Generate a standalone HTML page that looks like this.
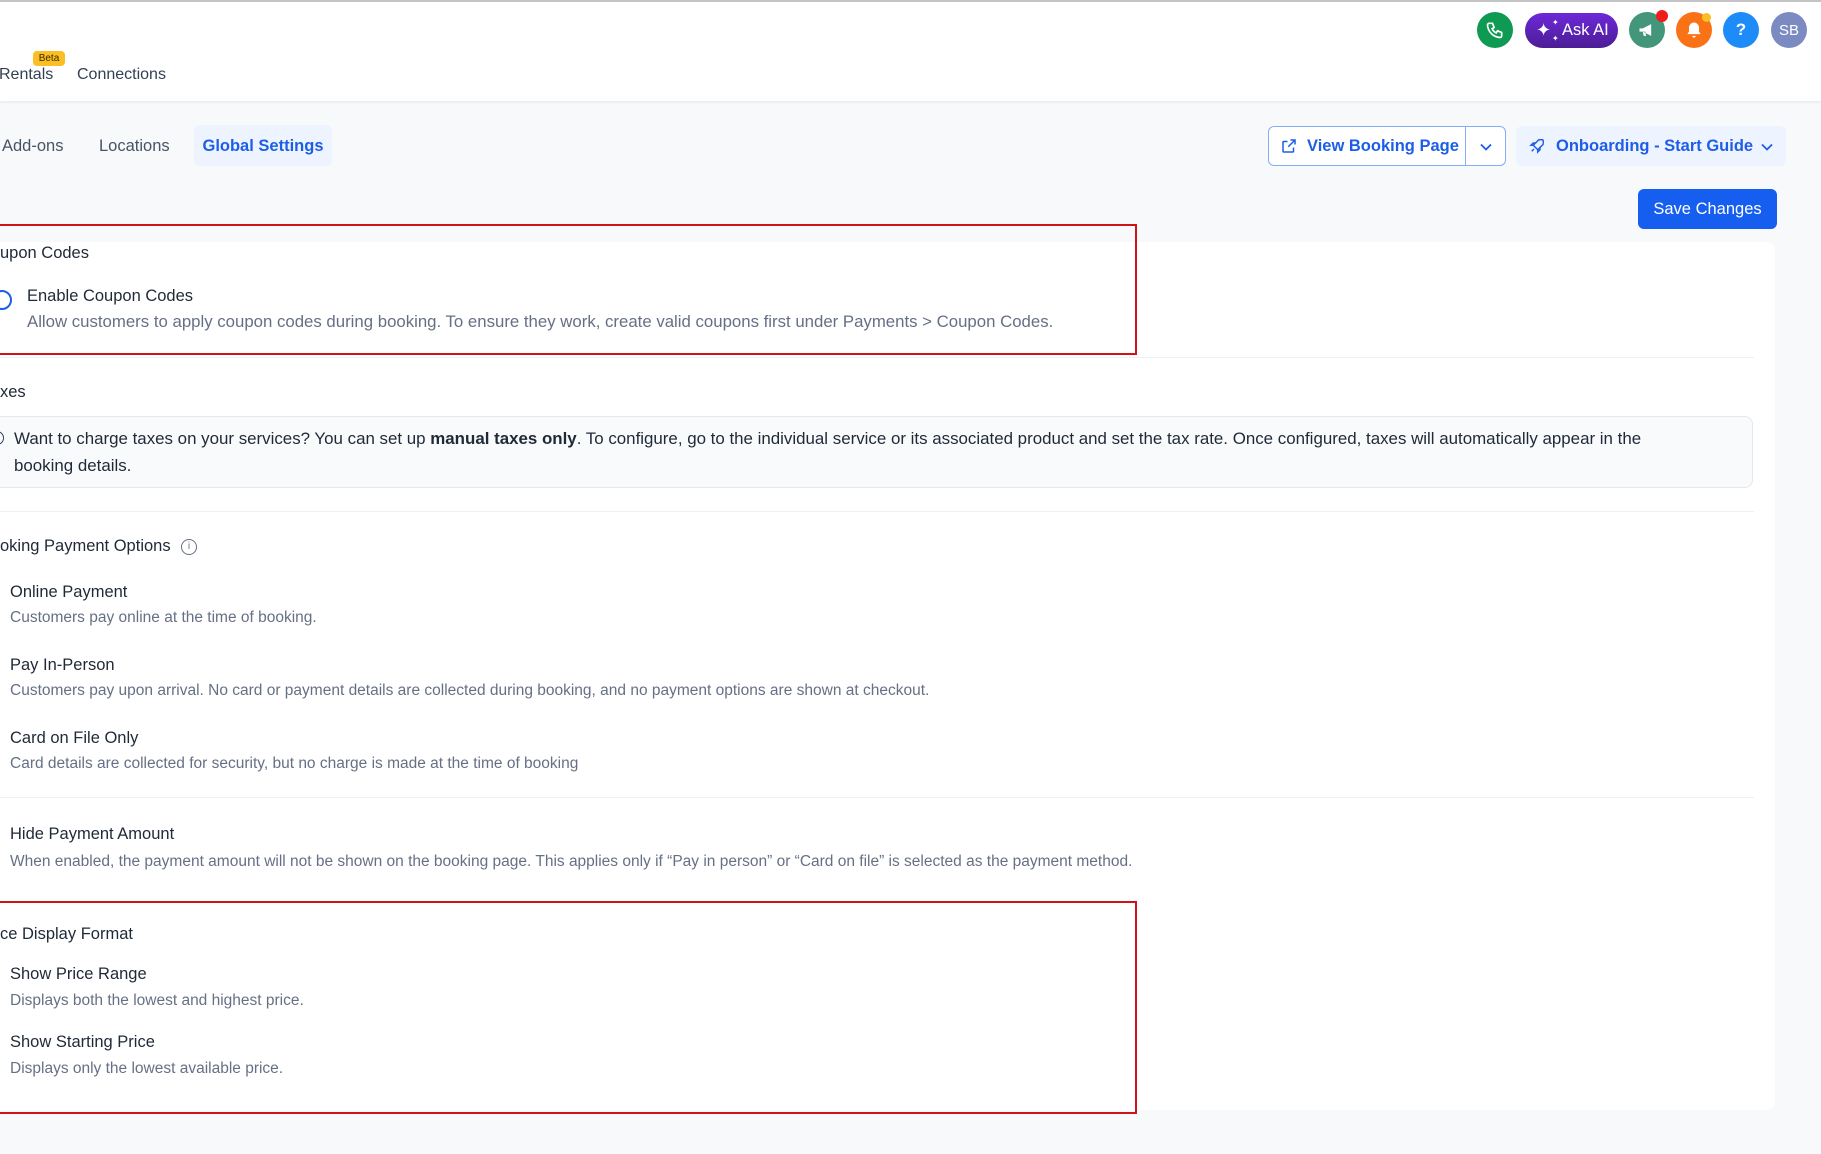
<!DOCTYPE html>
<html><head><meta charset="utf-8">
<style>
*{box-sizing:border-box;margin:0;padding:0}
body{width:1821px;height:1154px;overflow:hidden;background:#f8f9fb;font-family:"Liberation Sans",sans-serif;position:relative;color:#1f2937}
.a{position:absolute;white-space:nowrap}
.t{font-size:16.5px;color:#1f2937;line-height:20px}
.d{font-size:15.5px;color:#667085;line-height:20px}
.hdr{position:absolute;left:0;top:0;width:1821px;height:101px;background:#fff;border-top:2px solid #c4c4c4;box-shadow:0 1px 3px rgba(0,0,0,.08)}
.circ{position:absolute;width:36px;height:36px;border-radius:50%;top:10px;display:flex;align-items:center;justify-content:center;color:#fff}
.red{position:absolute;border:2px solid #d0121b}
.hr{position:absolute;left:0;width:1754px;height:1px;background:#eef0f3}
</style></head><body>
<div class="hdr">
  <div class="a" style="left:33px;top:49px;width:32px;height:15px;background:#fbbf24;border-radius:4px;font-size:10px;line-height:15px;text-align:center;color:#3b2a00">Beta</div>
  <div class="a" style="left:-1px;top:64px;font-size:16px;color:#344054">Rentals</div>
  <div class="a" style="left:77px;top:64px;font-size:16px;color:#344054">Connections</div>
  <div class="circ" style="left:1477px;background:#0e9a52"><svg width="20" height="20" viewBox="0 0 24 24" fill="none" stroke="#fff" stroke-width="2"><path d="M5 4h4l2 5-2.5 1.5a11 11 0 005 5L15 13l5 2v4a2 2 0 01-2 2A16 16 0 013 6a2 2 0 012-2"/></svg></div>
  <div class="a" style="left:1525px;top:11px;width:93px;height:35px;border-radius:18px;background:linear-gradient(#6d28d9,#4c1d95);color:#fff;font-size:16.5px;line-height:35px;padding-left:37px">Ask AI<span style="position:absolute;left:11px;top:0;font-size:18px">✦</span><span style="position:absolute;left:27px;top:-8px;font-size:8px">✦</span><span style="position:absolute;left:27px;top:8px;font-size:8px">✦</span></div>
  <div class="circ" style="left:1629px;background:#43967a"><svg width="20" height="20" viewBox="0 0 24 24" fill="#fff"><path d="M3 10h4l10-5v14L7 14H3z M7 14l1 5h3l-1-5"/></svg><span style="position:absolute;right:-3px;top:-2px;width:12px;height:12px;border-radius:50%;background:#ef1c1c"></span></div>
  <div class="circ" style="left:1676px;background:#f97316"><svg width="20" height="20" viewBox="0 0 24 24" fill="#fff"><path d="M12 3a6 6 0 00-6 6v5l-2 3h16l-2-3V9a6 6 0 00-6-6zM10 19h4a2 2 0 01-4 0"/></svg><span style="position:absolute;right:1px;top:1px;width:9px;height:9px;border-radius:50%;background:#fbbf24"></span></div>
  <div class="circ" style="left:1723px;background:#1d8cf8;font-size:17px;font-weight:bold">?</div>
  <div class="circ" style="left:1771px;background:#7b8bc2;font-size:15px">SB</div>
</div>

<div class="a" style="left:2px;top:137px;font-size:16.5px;color:#475467">Add-ons</div>
<div class="a" style="left:99px;top:137px;font-size:16.5px;color:#475467">Locations</div>
<div class="a" style="left:194px;top:125px;width:138px;height:41px;background:#eef4ff;border-radius:5px;font-size:16.5px;font-weight:bold;color:#1d5ee8;line-height:43px;text-align:center">Global Settings</div>

<div class="a" style="left:1268px;top:126px;width:238px;height:40px;border:1px solid #84adf5;border-radius:6px;background:#fff"></div>
<div class="a" style="left:1465px;top:126px;width:1px;height:40px;background:#84adf5"></div>
<svg class="a" style="left:1280px;top:137px" width="18" height="18" viewBox="0 0 24 24" fill="none" stroke="#1d5ee8" stroke-width="2"><path d="M14 4h6v6M20 4l-9 9M18 14v5a1 1 0 01-1 1H5a1 1 0 01-1-1V7a1 1 0 011-1h5"/></svg>
<div class="a" style="left:1307px;top:137px;font-size:16.5px;font-weight:bold;color:#1d5ee8">View Booking Page</div>
<svg class="a" style="left:1476px;top:137px" width="20" height="20" viewBox="0 0 24 24" fill="none" stroke="#1d5ee8" stroke-width="2.2"><path d="M6 9l6 6 6-6"/></svg>
<div class="a" style="left:1516px;top:126px;width:270px;height:40px;background:#eef4ff;border-radius:6px"></div>
<svg class="a" style="left:1528px;top:137px" width="18" height="18" viewBox="0 0 24 24" fill="none" stroke="#1d5ee8" stroke-width="2"><path d="M5 19l3-3M14 4c3-1 6 0 6 0s1 3 0 6l-7 7-6-6 7-7zM7 11H4l3-3h4M13 17v3l3-3v-4"/></svg>
<div class="a" style="left:1556px;top:137px;font-size:16.5px;font-weight:bold;color:#1d5ee8">Onboarding - Start Guide</div>
<svg class="a" style="left:1757px;top:137px" width="20" height="20" viewBox="0 0 24 24" fill="none" stroke="#1d5ee8" stroke-width="2.2"><path d="M6 9l6 6 6-6"/></svg>

<div class="a" style="left:1638px;top:189px;width:139px;height:40px;background:#155eef;border-radius:6px;color:#fff;font-size:16.5px;line-height:41px;text-align:center">Save Changes</div>

<div class="a" style="left:-10px;top:242px;width:1785px;height:868px;background:#fff;border-radius:8px"></div>

<div class="a t" style="left:0;top:243px">upon Codes</div>
<div class="a" style="left:-8px;top:290px;width:20px;height:20px;border:2.5px solid #1d5ee8;border-radius:50%"></div>
<div class="a t" style="left:27px;top:286px">Enable Coupon Codes</div>
<div class="a" style="left:27px;top:312px;font-size:16.8px;color:#667085;line-height:20px">Allow customers to apply coupon codes during booking. To ensure they work, create valid coupons first under Payments &gt; Coupon Codes.</div>
<div class="hr" style="top:357px"></div>

<div class="a t" style="left:0;top:382px">xes</div>
<div class="a" style="left:-10px;top:416px;width:1763px;height:72px;border:1px solid #e4e7ec;border-radius:8px;background:#f9fafb"></div>
<div class="a" style="left:-10px;top:431px;width:14px;height:14px;border:1.5px solid #344054;border-radius:50%"></div>
<div class="a" style="left:14px;top:429px;font-size:16.9px;color:#1f2937;line-height:20px">Want to charge taxes on your services? You can set up <b>manual taxes only</b>. To configure, go to the individual service or its associated product and set the tax rate. Once configured, taxes will automatically appear in the</div>
<div class="a" style="left:14px;top:456px;font-size:16.9px;color:#1f2937;line-height:20px">booking details.</div>
<div class="hr" style="top:511px"></div>

<div class="a t" style="left:0;top:536px">oking Payment Options</div>
<div class="a" style="left:181px;top:539px;width:16px;height:16px;border:1.3px solid #667085;border-radius:50%;font-size:10px;line-height:14px;text-align:center;color:#667085">i</div>

<div class="a t" style="left:10px;top:582px">Online Payment</div>
<div class="a d" style="left:10px;top:608px">Customers pay online at the time of booking.</div>
<div class="a t" style="left:10px;top:655px">Pay In-Person</div>
<div class="a d" style="left:10px;top:681px">Customers pay upon arrival. No card or payment details are collected during booking, and no payment options are shown at checkout.</div>
<div class="a t" style="left:10px;top:728px">Card on File Only</div>
<div class="a d" style="left:10px;top:754px">Card details are collected for security, but no charge is made at the time of booking</div>
<div class="hr" style="top:797px"></div>

<div class="a t" style="left:10px;top:824px">Hide Payment Amount</div>
<div class="a d" style="left:10px;top:852px">When enabled, the payment amount will not be shown on the booking page. This applies only if “Pay in person” or “Card on file” is selected as the payment method.</div>

<div class="a t" style="left:0;top:924px">ce Display Format</div>
<div class="a t" style="left:10px;top:964px">Show Price Range</div>
<div class="a d" style="left:10px;top:991px">Displays both the lowest and highest price.</div>
<div class="a t" style="left:10px;top:1032px">Show Starting Price</div>
<div class="a d" style="left:10px;top:1059px">Displays only the lowest available price.</div>

<div class="red" style="left:-5px;top:224px;width:1142px;height:131px"></div>
<div class="red" style="left:-5px;top:901px;width:1142px;height:213px"></div>
</body></html>
